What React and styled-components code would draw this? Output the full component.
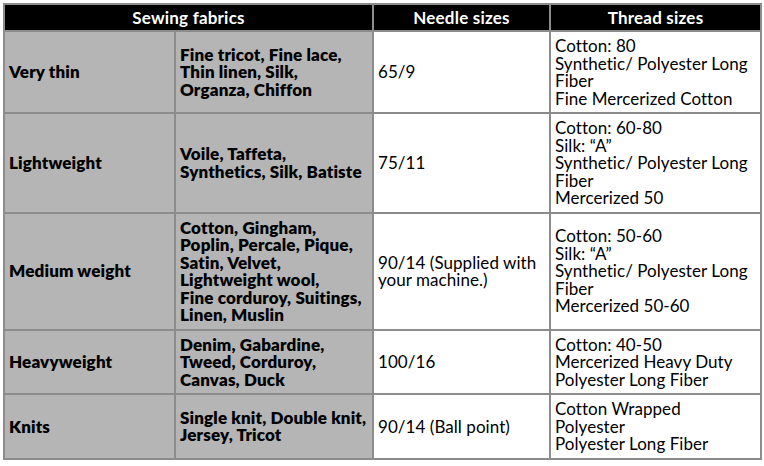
import React from "react";
import styled, { createGlobalStyle } from "styled-components";

const GlobalStyle = createGlobalStyle`
  html, body {
    margin: 0;
    padding: 0;
    background: #ffffff;
  }
  body {
    font-family: Lato, "Liberation Sans", sans-serif;
  }
`;

const rows = [
  {
    weight: "Very thin",
    fabrics: ["Fine tricot, Fine lace,", "Thin linen, Silk,", "Organza, Chiffon"],
    needle: ["65/9"],
    thread: ["Cotton: 80", "Synthetic/ Polyester Long", "Fiber", "Fine Mercerized Cotton"],
  },
  {
    weight: "Lightweight",
    fabrics: ["Voile, Taffeta,", "Synthetics, Silk, Batiste"],
    needle: ["75/11"],
    thread: ["Cotton: 60-80", "Silk: \u201CA\u201D", "Synthetic/ Polyester Long", "Fiber", "Mercerized 50"],
  },
  {
    weight: "Medium weight",
    fabrics: [
      "Cotton, Gingham,",
      "Poplin, Percale, Pique,",
      "Satin, Velvet,",
      "Lightweight wool,",
      "Fine corduroy, Suitings,",
      "Linen, Muslin",
    ],
    needle: ["90/14 (Supplied with", "your machine.)"],
    thread: ["Cotton: 50-60", "Silk: \u201CA\u201D", "Synthetic/ Polyester Long", "Fiber", "Mercerized 50-60"],
  },
  {
    weight: "Heavyweight",
    fabrics: ["Denim, Gabardine,", "Tweed, Corduroy,", "Canvas, Duck"],
    needle: ["100/16"],
    thread: ["Cotton: 40-50", "Mercerized Heavy Duty", "Polyester Long Fiber"],
  },
  {
    weight: "Knits",
    fabrics: ["Single knit, Double knit,", "Jersey, Tricot"],
    needle: ["90/14 (Ball point)"],
    thread: ["Cotton Wrapped", "Polyester", "Polyester Long Fiber"],
  },
];

const Page = styled.div`
  padding: 3px 0 0 3px;
`;

const Table = styled.table`
  border-collapse: collapse;
  table-layout: fixed;
  width: 757px;
  border: 2px solid #8c8c8c;
`;

const HeadCell = styled.th`
  background: #000000;
  color: #ffffff;
  font-weight: 700;
  font-size: 17px;
  letter-spacing: 0.2px;
  line-height: 20px;
  height: 25px;
  padding: 0;
  text-align: center;
  border: 2px solid #8c8c8c;
`;

const Cell = styled.td`
  background: ${(p) => (p.$shaded ? "#b5b5b5" : "#ffffff")};
  color: #000000;
  font-weight: ${(p) => (p.$bold ? 800 : 400)};
  font-size: 17px;
  letter-spacing: ${(p) => (p.$bold ? "0.15px" : "0.05px")};
  line-height: 17.5px;
  padding: 5px 2px 5px 4px;
  vertical-align: middle;
  text-align: left;
  border: 2px solid #8c8c8c;
`;

const Line = styled.div`
  white-space: nowrap;
`;

const Lines = ({ items }) => items.map((t, i) => <Line key={i}>{t}</Line>);

export default function App() {
  return (
    <Page>
      <GlobalStyle />
      <Table>
        <colgroup>
          <col style={{ width: 171 }} />
          <col style={{ width: 198 }} />
          <col style={{ width: 177 }} />
          <col style={{ width: 211 }} />
        </colgroup>
        <thead>
          <tr>
            <HeadCell colSpan={2}>Sewing fabrics</HeadCell>
            <HeadCell>Needle sizes</HeadCell>
            <HeadCell>Thread sizes</HeadCell>
          </tr>
        </thead>
        <tbody>
          {rows.map((r) => (
            <tr key={r.weight}>
              <Cell $shaded $bold>{r.weight}</Cell>
              <Cell $shaded $bold>
                <Lines items={r.fabrics} />
              </Cell>
              <Cell>
                <Lines items={r.needle} />
              </Cell>
              <Cell>
                <Lines items={r.thread} />
              </Cell>
            </tr>
          ))}
        </tbody>
      </Table>
    </Page>
  );
}
